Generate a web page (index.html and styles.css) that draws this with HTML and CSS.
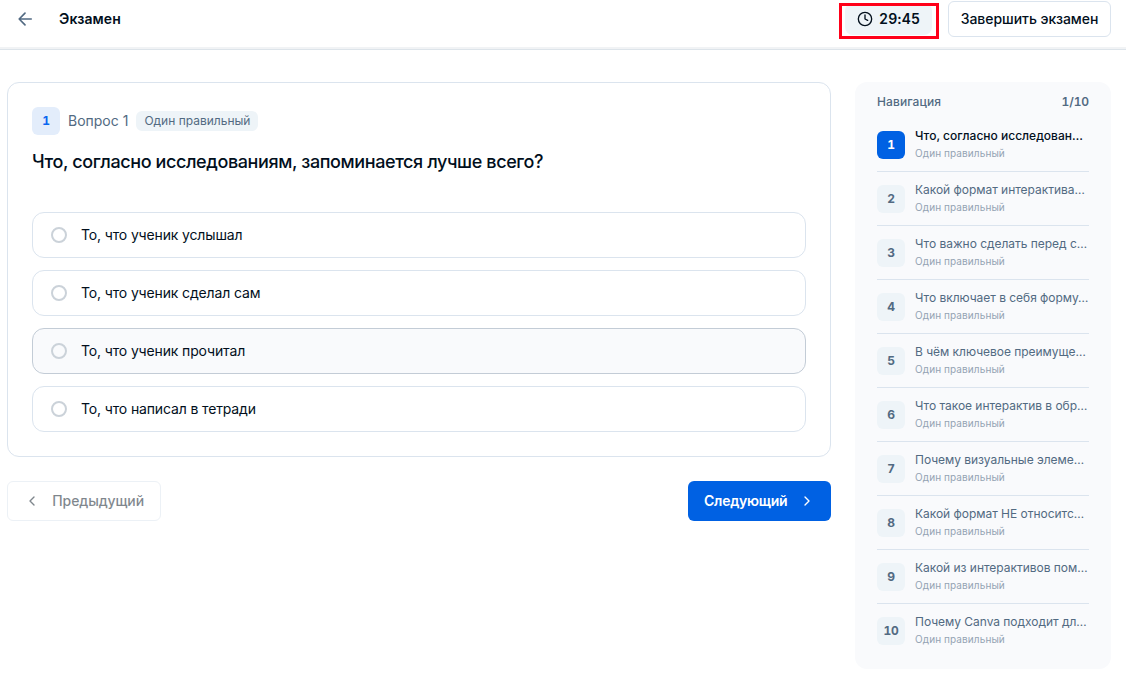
FILE: index.html
```html
<!DOCTYPE html>
<html lang="ru">
<head>
  <meta charset="UTF-8">
  <meta name="viewport" content="width=device-width, initial-scale=1.0">
  <title>Экзамен</title>
  <link rel="stylesheet" href="styles.css">
</head>
<body>
  <header class="header">
    <button class="back" aria-label="Назад">
      <svg width="20" height="20" viewBox="0 0 24 24"><path d="M12 19l-7-7 7-7M19.5 12H5"/></svg>
    </button>
    <h1>Экзамен</h1>
    <div class="timer">
      <svg width="16" height="16" viewBox="0 0 24 24"><circle cx="12" cy="12" r="10"/><path d="M12 6v6l4 2"/></svg>
      <span>29:45</span>
      <div class="timer-mark"></div>
    </div>
    <button class="finish">Завершить экзамен</button>
  </header>

  <div class="layout">
    <main>
      <section class="card">
        <div class="meta">
          <span class="num num-light">1</span>
          <span class="meta-label">Вопрос 1</span>
          <span class="tag">Один правильный</span>
        </div>
        <h2>Что, согласно исследованиям, запоминается лучше всего?</h2>
        <div class="options">
          <label class="option"><span class="radio"></span><span class="option-text">То, что ученик услышал</span></label>
          <label class="option"><span class="radio"></span><span class="option-text">То, что ученик сделал сам</span></label>
          <label class="option option-hover"><span class="radio"></span><span class="option-text">То, что ученик прочитал</span></label>
          <label class="option"><span class="radio"></span><span class="option-text">То, что написал в тетради</span></label>
        </div>
      </section>
      <div class="pager">
        <button class="prev" disabled>
          <svg width="16" height="16" viewBox="0 0 24 24"><path d="M15 18l-6-6 6-6"/></svg>
          <span>Предыдущий</span>
        </button>
        <button class="next">
          <span>Следующий</span>
          <svg width="16" height="16" viewBox="0 0 24 24"><path d="M9 18l6-6-6-6"/></svg>
        </button>
      </div>
    </main>

    <aside class="nav">
      <div class="nav-head"><span>Навигация</span><span class="nav-count">1/10</span></div>
      <ul>
        <li class="active"><span class="num">1</span><div><p>Что, согласно исследован…</p><small>Один правильный</small></div></li>
        <li><span class="num">2</span><div><p>Какой формат интерактива…</p><small>Один правильный</small></div></li>
        <li><span class="num">3</span><div><p>Что важно сделать перед с…</p><small>Один правильный</small></div></li>
        <li><span class="num">4</span><div><p>Что включает в себя форму…</p><small>Один правильный</small></div></li>
        <li><span class="num">5</span><div><p>В чём ключевое преимуще…</p><small>Один правильный</small></div></li>
        <li><span class="num">6</span><div><p>Что такое интерактив в обр…</p><small>Один правильный</small></div></li>
        <li><span class="num">7</span><div><p>Почему визуальные элеме…</p><small>Один правильный</small></div></li>
        <li><span class="num">8</span><div><p>Какой формат НЕ относитс…</p><small>Один правильный</small></div></li>
        <li><span class="num">9</span><div><p>Какой из интерактивов пом…</p><small>Один правильный</small></div></li>
        <li><span class="num">10</span><div><p>Почему Canva подходит дл…</p><small>Один правильный</small></div></li>
      </ul>
    </aside>
  </div>
</body>
</html>
```
FILE: styles.css
```css
* {
  box-sizing: border-box;
}
body {
  margin: 0;
  font-family: Inter, sans-serif;
  font-size: 14px;
  line-height: 20px;
  color: #020f1c;
  background-color: #fff;
}
h1, h2, p, ul {
  margin: 0;
  padding: 0;
}
button {
  font: inherit;
  color: inherit;
  background: none;
  border: none;
  padding: 0;
}
svg {
  display: block;
  flex-shrink: 0;
  fill: none;
  stroke: currentColor;
  stroke-width: 2;
  stroke-linecap: round;
  stroke-linejoin: round;
}

/* Header */
.header {
  display: flex;
  align-items: center;
  height: 50px;
  padding: 0 15px 12px;
  border-bottom: 1px solid #dde4ea;
  box-shadow: inset 0 -2px 0 #f1f3f5;
}
.back {
  color: #526a82;
}
.header h1 {
  margin-left: 24px;
  font-size: 14px;
  font-weight: 600;
  letter-spacing: 0.1px;
}
.timer {
  position: relative;
  display: flex;
  align-items: center;
  gap: 6px;
  height: 32px;
  width: 87px;
  margin-left: auto;
  padding: 0 12px;
  border-radius: 8px;
  background-color: #eef4f8;
  font-weight: 600;
  font-variant-numeric: tabular-nums;
  letter-spacing: 0.25px;
}
.timer-mark {
  position: absolute;
  left: -6px;
  top: 0;
  width: 100px;
  height: 36px;
  border: 3px solid #ff0019;
}
.finish {
  width: 163px;
  height: 36px;
  margin-left: 16px;
  border: 1px solid #dbe4ee;
  border-radius: 6px;
  font-weight: 500;
  letter-spacing: -0.05px;
}

.layout {
  display: flex;
  align-items: flex-start;
  gap: 24px;
  padding: 32px 15px 0 7px;
}
main {
  flex: 1;
}

/* Question */
.card {
  padding: 24px;
  border: 1px solid #dbe4ee;
  border-radius: 12px;
}
.meta {
  display: flex;
  align-items: center;
  gap: 8px;
  color: #526a82;
}
.num {
  display: flex;
  align-items: center;
  justify-content: center;
  flex-shrink: 0;
  width: 28px;
  height: 28px;
  border-radius: 6px;
  background-color: #eef4f8;
  font-size: 12px;
  font-weight: 700;
  font-variant-numeric: tabular-nums;
  letter-spacing: -0.3px;
}
.num-light {
  background-color: #e3edfb;
  color: #0a66f0;
}
.tag {
  padding: 0 8px;
  border-radius: 6px;
  background-color: #eef4f8;
  font-size: 12px;
}
.card h2 {
  margin-top: 12px;
  font-size: 18px;
  line-height: 29px;
  font-weight: 500;
  letter-spacing: -0.39px;
}
.options {
  display: flex;
  flex-direction: column;
  gap: 12px;
  margin-top: 36px;
}
.option {
  display: flex;
  align-items: center;
  gap: 14px;
  height: 46px;
  padding: 0 18px;
  border: 1px solid #dbe4ee;
  border-radius: 12px;
}
.option-hover {
  border-color: #c3ccd6;
  background-color: #f9fafc;
}
.option-text {
  letter-spacing: -0.14px;
}
.radio {
  width: 16px;
  height: 16px;
  border: 2px solid #cbd2d9;
  border-radius: 50%;
}

/* Previous / next */
.pager {
  display: flex;
  justify-content: space-between;
  margin-top: 24px;
}
.pager button {
  display: flex;
  align-items: center;
  justify-content: space-between;
  height: 40px;
  padding: 0 16px;
  border-radius: 6px;
}
.pager .prev {
  width: 154px;
  border: 1px solid #dbe4ee;
  font-weight: 500;
  letter-spacing: -0.1px;
  opacity: 0.5;
}
.pager .next {
  width: 143px;
  background-color: #0061e3;
  color: #fff;
  font-weight: 600;
  letter-spacing: -0.25px;
}

/* Sidebar */
.nav {
  width: 256px;
  height: 587px;
  padding: 10px 22px 0;
  border-radius: 12px;
  background-color: #f9fafc;
  color: #526a82;
}
.nav-head {
  display: flex;
  justify-content: space-between;
  margin-bottom: 6px;
  font-size: 12px;
  font-weight: 500;
  letter-spacing: 0.1px;
}
.nav-count {
  font-weight: 600;
  font-variant-numeric: tabular-nums;
  letter-spacing: -0.1px;
}
.nav ul {
  list-style: none;
}
.nav li {
  display: flex;
  align-items: center;
  gap: 10px;
  height: 54px;
  padding: 9px 0 8px;
  border-bottom: 1px solid #dbe4ee;
}
.nav li:last-child {
  border-bottom-color: transparent;
}
.nav li div {
  padding-bottom: 3px;
}
.nav p {
  font-size: 12px;
  white-space: nowrap;
  letter-spacing: -0.03px;
}
.nav small {
  display: block;
  margin-bottom: 2px;
  font-size: 10px;
  line-height: 14px;
  letter-spacing: 0.1px;
  color: #94a3b3;
}
.nav .active p {
  color: #020f1c;
  font-weight: 500;
  letter-spacing: 0;
}
.nav .active .num {
  background-color: #0061e3;
  color: #fff;
}
```
